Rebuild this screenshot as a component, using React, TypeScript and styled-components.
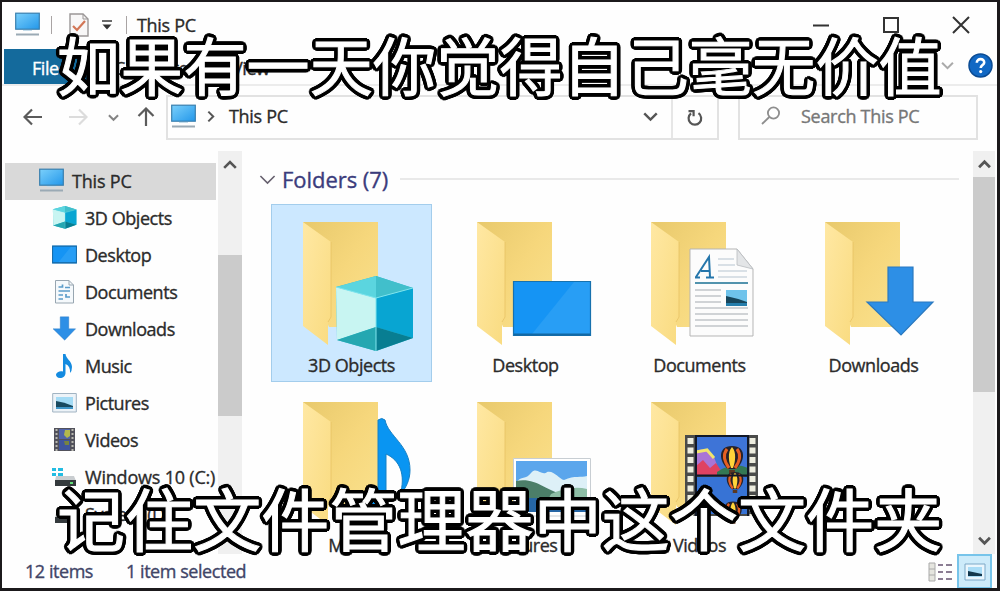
import React from "react";
import styled, { createGlobalStyle } from "styled-components";

const Global = createGlobalStyle`
  * { box-sizing: border-box; }
  html, body { margin: 0; padding: 0; background: #fff; overflow: hidden; }
  svg { display: block; flex: none; }
`;

const Window = styled.div`
  position: relative;
  width: 1000px;
  height: 591px;
  border: 2px solid #1b191b;
  border-right-width: 3px;
  border-bottom-width: 3px;
  background: #fefefe;
  color: #2b2b2b;
  font: 18px/24px "Open Sans", "Noto Sans", sans-serif;
  display: flex;
  flex-direction: column;
  overflow: hidden;
`;

const Label = styled.span<{ $w?: number; $color?: string; $size?: number }>`
  display: block;
  white-space: nowrap;
  letter-spacing: ${(p) => p.$w ?? -0.45}px;
  color: ${(p) => p.$color ?? "inherit"};
  font-size: ${(p) => p.$size ?? 18}px;
  -webkit-text-stroke: 0.35px currentColor;
`;

const TitleBar = styled.header`
  height: 47px;
  flex: none;
  display: flex;
  align-items: center;
  padding: 0 27px 2px 13px;
`;

const Divider = styled.i<{ $before: number }>`
  width: 1px;
  height: 18px;
  margin-left: ${(p) => p.$before}px;
  background: #a9a4a4;
`;

const QuickTools = styled.div`
  display: flex;
  align-items: center;
  width: 122px;
`;

const Spaced = styled.div<{ $before: number; $after?: number }>`
  flex: none;
  margin-left: ${(p) => p.$before}px;
  margin-right: ${(p) => p.$after ?? 0}px;
`;

const WindowButtons = styled.div`
  margin-left: auto;
  display: flex;
  gap: 52px;
`;

const Ribbon = styled.nav`
  height: 37px;
  flex: none;
  display: flex;
  align-items: flex-start;
  padding: 0 4px 0 2px;
  border-bottom: 2px solid #ececec;
`;

const FileTab = styled.div`
  width: 86px;
  height: 35px;
  padding: 7px 0 0 28px;
  background: #146a9c;
  color: #fff;
`;

const RibbonTab = styled.div<{ $width: number }>`
  width: ${(p) => p.$width}px;
  padding: 7px 0 0 24px;
`;

const RibbonEnd = styled.div`
  margin-left: auto;
  display: flex;
  align-items: center;
  gap: 14px;
  padding-top: 4px;
`;

const AddressRow = styled.div`
  height: 65px;
  flex: none;
  display: flex;
  align-items: flex-start;
  padding: 9px 19px 0 21px;
`;

const NavButtons = styled.div`
  width: 143px;
  height: 44px;
  display: flex;
  align-items: center;
`;

const Box = styled.div<{ $width: number }>`
  width: ${(p) => p.$width}px;
  height: 45px;
  flex: none;
  border: 2px solid #e2e2e2;
  display: flex;
  align-items: center;
`;

const AddressBox = styled(Box)`
  padding-left: 3px;
`;

const Path = styled.div`
  flex: 1;
  display: flex;
  align-items: center;
  padding-bottom: 3px;
`;

const PathEnd = styled.div`
  margin-left: auto;
  width: 28px;
`;

const Refresh = styled.div`
  width: 46px;
  height: 100%;
  border-left: 2px solid #e6e6e6;
  display: grid;
  place-items: center;
`;

const SearchBox = styled(Box)`
  margin-left: 19px;
  padding: 0 0 3px 20px;
  gap: 19px;
`;

const Body = styled.div`
  display: flex;
  height: 403px;
  flex: none;
`;

const Tree = styled.div`
  width: 216px;
  padding: 12px 0 0 3px;
`;

const TreeRow = styled.div<{ $root?: boolean }>`
  width: 211px;
  height: 37px;
  display: flex;
  align-items: center;
  gap: 8px;
  padding-bottom: 2px;
  padding-left: ${(p) => (p.$root ? 34 : 47)}px;
  background: ${(p) => (p.$root ? "#d9d9d9" : "transparent")};
`;

const ScrollTrack = styled.div<{ $width: number }>`
  width: ${(p) => p.$width}px;
  background: #f0f0f0;
  display: flex;
  flex-direction: column;
  align-items: stretch;
`;

const ScrollArrow = styled.div<{ $height: number }>`
  height: ${(p) => p.$height}px;
  display: grid;
  place-items: center;
`;

const ScrollSpace = styled.div<{ $height: number; $thumb?: boolean }>`
  height: ${(p) => p.$height}px;
  background: ${(p) => (p.$thumb ? "#cbcbcb" : "transparent")};
`;

const Content = styled.main`
  width: 731px;
  padding-left: 17px;
`;

const GroupHeader = styled.div`
  height: 53px;
  display: flex;
  align-items: center;
  padding: 3px 14px 0 0;
  gap: 6px;
`;

const GroupLine = styled.i`
  flex: 1;
  height: 2px;
  margin-left: 6px;
  background: #e9e9e9;
`;

const Tiles = styled.div`
  display: grid;
  grid-template-columns: repeat(4, 161px);
  grid-auto-rows: 178px;
  gap: 2px 13px;
  padding-left: 12px;
`;

const Tile = styled.div<{ $selected?: boolean }>`
  display: flex;
  flex-direction: column;
  align-items: center;
  line-height: 16px;
  background: ${(p) => (p.$selected ? "#cce8ff" : "transparent")};
  box-shadow: ${(p) => (p.$selected ? "inset 0 0 0 1px #a3cdec" : "none")};
`;

const TileLabel = styled(Label)`
  margin-top: 3px;
`;

const StatusBar = styled.footer`
  flex: 1;
  display: flex;
  align-items: center;
  padding: 0 5px 4px 23px;
  gap: 33px;
`;

const StatusText = styled(Label)`
  padding-bottom: 2px;
`;

const Views = styled.div`
  margin-left: auto;
  display: flex;
  align-items: center;
  gap: 4px;
`;

const ActiveView = styled.div`
  width: 35px;
  height: 35px;
  border: 2px solid #77c4ea;
  background: #cdebfa;
  display: grid;
  place-items: center;
`;

/* Round outline: shadow copies spread evenly on two circles around the glyphs. */
const outline = [2.2, 4]
  .flatMap((r) =>
    Array.from({ length: 24 }, (_, i) => {
      const a = (i * Math.PI) / 12;
      return `${(r * Math.cos(a)).toFixed(2)}px ${(r * Math.sin(a)).toFixed(2)}px 0 #000`;
    })
  )
  .join(", ");

const Caption = styled.div<{ $top: number; $size: number; $gap: number }>`
  position: absolute;
  left: 55px;
  top: ${(p) => p.$top}px;
  white-space: nowrap;
  font: 400 ${(p) => p.$size}px/80px "Noto Sans CJK SC", sans-serif;
  letter-spacing: ${(p) => p.$gap}px;
  color: #fff;
  -webkit-text-stroke: 1px #fff;
  text-shadow: ${outline};
`;

const PcIcon = () => (
  <svg width="25" height="25" viewBox="0 0 25 25">
    <defs>
      <linearGradient id="pc" x2="1" y2="1">
        <stop stopColor="#7bd0fb" /><stop offset="1" stopColor="#2397ea" />
      </linearGradient>
    </defs>
    <rect x=".7" y="1.2" width="23.6" height="16" fill="url(#pc)" stroke="#397fae" strokeWidth="1.2" />
    <path d="M8 18h9v1H8z" fill="#c4dcea" />
    <path d="M1 22.5h23" stroke="#9baab5" strokeWidth="2" />
  </svg>
);

const Chevron = ({ w = 12, dir = "down", color = "#555", sw = 2 }: { w?: number; dir?: "down" | "up" | "right"; color?: string; sw?: number }) => (
  <svg width={w} height={w} viewBox="0 0 12 12" fill="none" stroke={color} strokeWidth={(sw * 12) / w}>
    <path d={dir === "down" ? "M1 3.5 6 8.5 11 3.5" : dir === "up" ? "M1 8.5 6 3.5 11 8.5" : "M4 1.5 8.5 6 4 10.5"} />
  </svg>
);

const Arrow = ({ rotate = 0, color = "#5b5b5b" }) => (
  <svg width="20" height="20" viewBox="0 0 20 20" fill="none" stroke={color} strokeWidth="2.2">
    <path transform={`rotate(${rotate} 10 10)`} d="M19 10H2M9 2.5 1.5 10 9 17.5" />
  </svg>
);

const CubeShape = () => (
  <g>
    <path d="M65 83 105 72 142 84V134L105 147 66 136Z" fill="#35bdd0" />
    <path d="M65 83 105 94V123L66 136Z" fill="#c8f5f2" />
    <path d="M105 94 142 84V134L105 123Z" fill="#08a5d2" />
    <path d="M66 136 105 123V147Z" fill="#25a7b1" />
    <path d="M105 123 142 134 105 147Z" fill="#087e92" />
    <path d="M65 83 105 72V94Z" fill="#5bd5df" />
    <path d="M105 72 142 84 105 94Z" fill="#41bfcb" />
    <path d="M65 83 105 94 142 84M105 94V147" fill="none" stroke="#80e5ee" strokeWidth="1" />
  </g>
);

const NoteShape = () => (
  <path
    d="M107 36Q111 33 114 36C117 52 139 61 139 86C139 96 135 104 129 111C135 91 129 76 115 70V119C115 128 108 133 99 133C91 133 86 128 87 122C89 114 98 110 107 113Z"
    fill="#0995f2" stroke="#1680c5" strokeWidth="1"
  />
);

const ArrowShape = () => (
  <path d="M95 63H120V98H140L108 131 74 98H95Z" fill="#2d8fe6" stroke="#2b79bf" strokeWidth="1.2" />
);

const PageShape = () => (
  <g>
    <path d="M71 45H118L134 65V132H71Z" fill="#fcfcfc" stroke="#b5b5b5" />
    <path d="M118 45V61L134 65Z" fill="#e3e5e7" stroke="#b9bdc0" strokeWidth=".8" />
    <path d="M77 73 90 53 91 73M82 67H91M76 73.5H81M87 73.5H95" fill="none" stroke="#2576ab" strokeWidth="2" />
    <path d="M99 55H115M99 61H116M99 67H128M99 73H128" stroke="#b5c3cf" strokeWidth="1.2" />
    <path d="M76 79H129" stroke="#5293ad" strokeWidth="2" />
    <path d="M76 86H102M76 92H102M76 98H102M76 104H129M76 110H129M76 116H129M76 122H129" stroke="#c1c5c9" strokeWidth="1.3" />
    <path d="M107 86H128V102H107Z" fill="#6fc3eb" />
    <path d="M107 92Q117 94 128 98V102H107Z" fill="#17465c" />
    <path d="M107 99H128V102H107Z" fill="#257eac" />
  </g>
);

const PictureShape = () => (
  <g>
    <path d="M68.5 74.5H145.5V132H68.5Z" fill="#fff" stroke="#c8ced3" />
    <path d="M71 77H142V128H71Z" fill="#5ba6ec" />
    <path d="M71 99C76 91 81 96 86 89C92 82 97 93 102 88C109 86 114 95 119 96C130 91 136 94 142 92V110H71Z" fill="#ddf0f7" />
    <path d="M71 97C90 93 100 106 121 112V117H71Z" fill="#4c7e69" />
    <path d="M106 110Q126 101 142 105V116H103Z" fill="#8dbda5" />
    <path d="M71 114H142V128H71Z" fill="#2666a5" />
  </g>
);

const Balloon = ({ x, y, s = 1 }: { x: number; y: number; s?: number }) => (
  <g transform={`translate(${x} ${y}) scale(${s})`}>
    <path d="M0-12C15-12 13 4 4 11H-4C-13 4-15-12 0-12Z" fill="#272129" />
    <path d="M-5-9Q-11-1-3 10M5-9Q11-1 3 10" fill="none" stroke="#e65f22" strokeWidth="3" />
    <path d="M0-11C5-6 3 5 1 10H-1C-3 5-5-6 0-11Z" fill="#ffd43a" />
    <path d="M-3 12H3V16H-3Z" fill="#5b3821" />
  </g>
);

const FilmShape = () => (
  <g>
    <path d="M66 51H139V132H66Z" fill="#4a4b4a" />
    <path d="M77 53H129V91H77Z" fill="#3e74d7" />
    <path d="M77 93H129V130H77Z" fill="#3773d5" />
    <path d="M77 67Q86 62 95 73L101 89H77Z" fill="#aa75d5" />
    <path d="M77 68 88 66 95 74" fill="none" stroke="#f2e56d" strokeWidth="3" />
    <path d="M77 82 84 76 91 84 97 79 105 91H77Z" fill="#df4262" />
    <path d="M98 88Q114 77 129 84V91H98Z" fill="#347854" />
    <Balloon x={113} y={74} />
    <Balloon x={116} y={97} s={0.75} />
    <Balloon x={114} y={127} s={0.8} />
    <path d="M71.5 54V132M133.5 54V132" stroke="#ededdf" strokeWidth="6" strokeDasharray="6 3.5" />
    <path d="M77 52H129M77 91.5H129" stroke="#111827" strokeWidth="2" />
    <path d="M77 51V132M129 51V132" stroke="#111827" strokeWidth="2" />
  </g>
);

const DesktopShape = () => (
  <g>
    <path d="M68 77H146V132H68Z" fill="#1594f4" />
    <path d="M129 78H145V130H87Z" fill="#289ef5" />
    <path d="M68.5 77.5H145.5V131.5H68.5Z" fill="none" stroke="#1771ae" strokeWidth="1.2" />
    <path d="M69 130.5H145" stroke="#1268a4" strokeWidth="2" />
  </g>
);

const FolderArt = ({ children }: { children: React.ReactNode }) => (
  <svg width="161" height="150" viewBox="0 0 161 150">
    <defs>
      <linearGradient id="back" x2="1" y2="1">
        <stop stopColor="#e8c96c" /><stop offset=".5" stopColor="#f6d77c" /><stop offset="1" stopColor="#fae18d" />
      </linearGradient>
      <linearGradient id="front" x2="1" y2="1">
        <stop stopColor="#ffe8a3" /><stop offset="1" stopColor="#f9db80" />
      </linearGradient>
    </defs>
    <path d="M32 18H107V123H58L32 60Z" fill="url(#back)" />
    <path d="M32 18 60 38V113L57 118V141L32 122Z" fill="url(#front)" />
    <path d="M60 38V113L57 118" fill="none" stroke="#e5bf60" strokeWidth=".7" />
    {children}
  </svg>
);

const Mini = ({ box, children }: { box: string; children: React.ReactNode }) => (
  <svg width="25" height="25" viewBox={box}>{children}</svg>
);

const MiniDocument = () => (
  <svg width="25" height="25" viewBox="0 0 25 25">
    <path d="M3.5 1.5H17L21.5 6V24H3.5Z" fill="#f5f9fc" stroke="#98a6b1" />
    <path d="M17 1.5V6H21.5" fill="none" stroke="#98a6b1" />
    <path d="M6.5 8H10.5V5.5M13 8.5H18M6.5 12H18M14 15V18H18M6.5 16H11M6.5 20H11" fill="none" stroke="#5b9cc9" strokeWidth="1.7" />
  </svg>
);

const MiniNote = () => (
  <svg width="25" height="25" viewBox="0 0 25 25">
    <path d="M11 1H13.5C14 6 20 8 20 14Q20 18 18 20Q18.500 13 13.500 11V20C13.500 23 11 25 8 25C5 25 4 23 4 21.500C4.500 19 8 17.500 11 18.500Z" fill="#148be0" />
  </svg>
);

const MiniPicture = () => (
  <svg width="25" height="25" viewBox="0 0 25 25">
    <path d="M.7 3.5H24.3V22H.7Z" fill="#edf3f8" stroke="#a1b3c2" />
    <path d="M4 7H21V19H4Z" fill="#a4dbf5" />
    <path d="M4 11Q12 12 21 16V18H4Z" fill="#194a60" />
    <path d="M4 17H21V19H4Z" fill="#4096c8" />
  </svg>
);

const MiniFilm = () => (
  <svg width="25" height="25" viewBox="0 0 25 25">
    <path d="M2 1H23V24H2Z" fill="#51515b" />
    <path d="M7 2H18V12H7Z" fill="#5063a8" />
    <path d="M7 13H18V23H7Z" fill="#3f559e" />
    <path d="M13 3H18V9L15 11 12 8Z" fill="#b3b84c" />
    <path d="M12 14H17V18H13Z" fill="#77843f" />
    <path d="M4.5 2V24M20.500 2V24" stroke="#b8b8b0" strokeWidth="2" strokeDasharray="2 2" />
  </svg>
);

const DriveIcon = ({ windows }: { windows?: boolean }) => (
  <svg width="25" height="25" viewBox="0 0 25 25">
    {windows && <path d="M0 4H4V7H0ZM6 4H11V7H6ZM0 9H4V12H0ZM6 9H11V12H6Z" fill="#22bce2" />}
    <path d="M4 12H22L24 17H3Z" fill="#c9cdd0" />
    <path d="M3 16H24V22H3Z" fill="#343a3d" />
    <path d="M18 19H21" stroke="#61dd77" strokeWidth="2" />
  </svg>
);

const tree = [
  { name: "3D Objects", icon: <Mini box="62 70 82 80"><CubeShape /></Mini> },
  { name: "Desktop", icon: <Mini box="67 66 80 77"><DesktopShape /><path d="M68.5 77.5H145.5V131.5H68.5Z" fill="none" stroke="#176ead" strokeWidth="4" /></Mini> },
  { name: "Documents", icon: <MiniDocument /> },
  { name: "Downloads", icon: <Mini box="71 61 73 72"><ArrowShape /></Mini> },
  { name: "Music", icon: <MiniNote /> },
  { name: "Pictures", icon: <MiniPicture /> },
  { name: "Videos", icon: <MiniFilm /> },
  { name: "Windows 10 (C:)", icon: <DriveIcon windows />, spacing: -0.2 },
  { name: "System (D:)", icon: <DriveIcon /> },
];

const folders = [
  { name: "3D Objects", art: <CubeShape /> },
  { name: "Desktop", art: <DesktopShape /> },
  { name: "Documents", art: <PageShape /> },
  { name: "Downloads", art: <ArrowShape /> },
  { name: "Music", art: <NoteShape /> },
  { name: "Pictures", art: <PictureShape /> },
  { name: "Videos", art: <FilmShape /> },
];

export default function App() {
  return (
    <>
      <Global />
      <Window>
        <TitleBar>
          <QuickTools>
            <PcIcon />
            <Divider $before={11} />
            <Spaced $before={17}>
              <svg width="20" height="24" viewBox="0 0 20 24">
                <path d="M1 1H14L19 6V23H1Z" fill="#f8f7f7" stroke="#9a9696" strokeWidth="1.4" />
                <path d="M14 1V6H19" fill="none" stroke="#9a9696" />
                <path d="M4 13 8 17 16 8" fill="none" stroke="#d27656" strokeWidth="2.2" />
              </svg>
            </Spaced>
            <Spaced $before={12}>
              <svg width="12" height="12" viewBox="0 0 12 12">
                <path d="M1 2H11" stroke="#444" strokeWidth="1.6" /><path d="M1.5 5.5H10.5L6 10.5Z" fill="#333" />
              </svg>
            </Spaced>
            <Divider $before={13} />
          </QuickTools>
          <Label $w={-0.3}>This PC</Label>
          <WindowButtons>
            <svg width="18" height="18" viewBox="0 0 18 18"><path d="M1 9.5H17" stroke="#333" strokeWidth="2" /></svg>
            <svg width="18" height="18" viewBox="0 0 18 18"><path d="M2 2H16V16H2Z" fill="none" stroke="#333" strokeWidth="2" /></svg>
            <svg width="18" height="18" viewBox="0 0 18 18"><path d="M1 1 17 17M17 1 1 17" stroke="#333" strokeWidth="2" /></svg>
          </WindowButtons>
        </TitleBar>

        <Ribbon>
          <FileTab><Label>File</Label></FileTab>
          <RibbonTab $width={118}><Label>Computer</Label></RibbonTab>
          <RibbonTab $width={80}><Label>View</Label></RibbonTab>
          <RibbonEnd>
            <Chevron w={13} color="#aaa" />
            <svg width="25" height="25" viewBox="0 0 25 25">
              <circle cx="12.5" cy="12.5" r="11.5" fill="#1168c4" stroke="#0b4b93" strokeWidth="1.5" />
              <path d="M8.8 9.7C8.8 4.8 16.5 5 16.2 9.6C16 12 12.7 12.3 12.7 15" fill="none" stroke="#fff" strokeWidth="2.6" />
              <circle cx="12.7" cy="18.6" r="1.6" fill="#fff" />
            </svg>
          </RibbonEnd>
        </Ribbon>

        <AddressRow>
          <NavButtons>
            <Arrow />
            <Spaced $before={25} $after={20}><Arrow rotate={180} color="#dcdcdc" /></Spaced>
            <Chevron w={11} color="#858585" />
            <Spaced $before={17}><Arrow rotate={90} /></Spaced>
          </NavButtons>
          <AddressBox $width={553}>
            <Path>
              <PcIcon />
              <Spaced $before={8} $after={12}><Chevron w={13} dir="right" /></Spaced>
              <Label $w={-0.3}>This PC</Label>
              <PathEnd><Chevron w={15} sw={2.4} /></PathEnd>
            </Path>
            <Refresh>
              <svg width="18" height="18" viewBox="0 0 18 18" fill="none" stroke="#555" strokeWidth="2.2">
                <path d="M12.5 4.2A6.3 6.3 0 1 1 5 4.4M2.5 2.2H7.6V7.2" />
              </svg>
            </Refresh>
          </AddressBox>
          <SearchBox $width={240}>
            <svg width="22" height="22" viewBox="0 0 22 22" fill="none" stroke="#8e8e8e" strokeWidth="1.8">
              <circle cx="13.5" cy="8" r="5.6" /><path d="M9.3 12 2 19" />
            </svg>
            <Label $color="#777" $w={-0.3}>Search This PC</Label>
          </SearchBox>
        </AddressRow>

        <Body>
          <Tree>
            <TreeRow $root><PcIcon /><Label $w={-0.2}>This PC</Label></TreeRow>
            {tree.map((t) => <TreeRow key={t.name}>{t.icon}<Label $w={t.spacing}>{t.name}</Label></TreeRow>)}
          </Tree>
          <ScrollTrack $width={24}>
            <ScrollArrow $height={27}><Chevron w={14} dir="up" sw={2.6} /></ScrollArrow>
            <ScrollSpace $height={77} />
            <ScrollSpace $height={161} $thumb />
          </ScrollTrack>
          <Content>
            <GroupHeader>
              <Chevron w={17} sw={1.6} color="#66606e" />
              <Label $size={22} $color="#3b3c7c" $w={-0.05}>Folders (7)</Label>
              <GroupLine />
            </GroupHeader>
            <Tiles>
              {folders.map((f, i) => (
                <Tile key={f.name} $selected={i === 0}>
                  <FolderArt>{f.art}</FolderArt>
                  <TileLabel>{f.name}</TileLabel>
                </Tile>
              ))}
            </Tiles>
          </Content>
          <ScrollTrack $width={22}>
            <ScrollArrow $height={26}><Chevron w={13} dir="up" sw={2.8} /></ScrollArrow>
            <ScrollSpace $height={215} $thumb />
            <ScrollSpace $height={135} />
            <ScrollArrow $height={26}><Chevron w={13} sw={2.8} /></ScrollArrow>
          </ScrollTrack>
        </Body>

        <StatusBar>
          <StatusText $color="#414567">12 items</StatusText>
          <StatusText $color="#414567">1 item selected</StatusText>
          <Views>
            <svg width="25" height="22" viewBox="0 0 25 22">
              <path d="M1 2H7V20H1ZM1 8H7M1 14H7" fill="#e5e5df" stroke="#aaa" />
              <path d="M10 4H15M18 4H24M10 11H15M18 11H24M10 18H15M18 18H24" stroke="#8b7d93" strokeWidth="1.8" />
            </svg>
            <ActiveView><svg width="22" height="18" viewBox="0 0 22 18">
              <path d="M1 1H21V17H1Z" fill="#eaf6fd" stroke="#7da8c7" />
              <path d="M4 4H18V14H4Z" fill="#a9dcf6" /><path d="M4 8 18 11V13H4Z" fill="#14384d" />
            </svg></ActiveView>
          </Views>
        </StatusBar>
        <Caption $top={21} $size={63} $gap={0.2}>如果有一天你觉得自己毫无价值</Caption>
        <Caption $top={475} $size={68} $gap={0.1}>记住文件管理器中这个文件夹</Caption>
      </Window>
    </>
  );
}
